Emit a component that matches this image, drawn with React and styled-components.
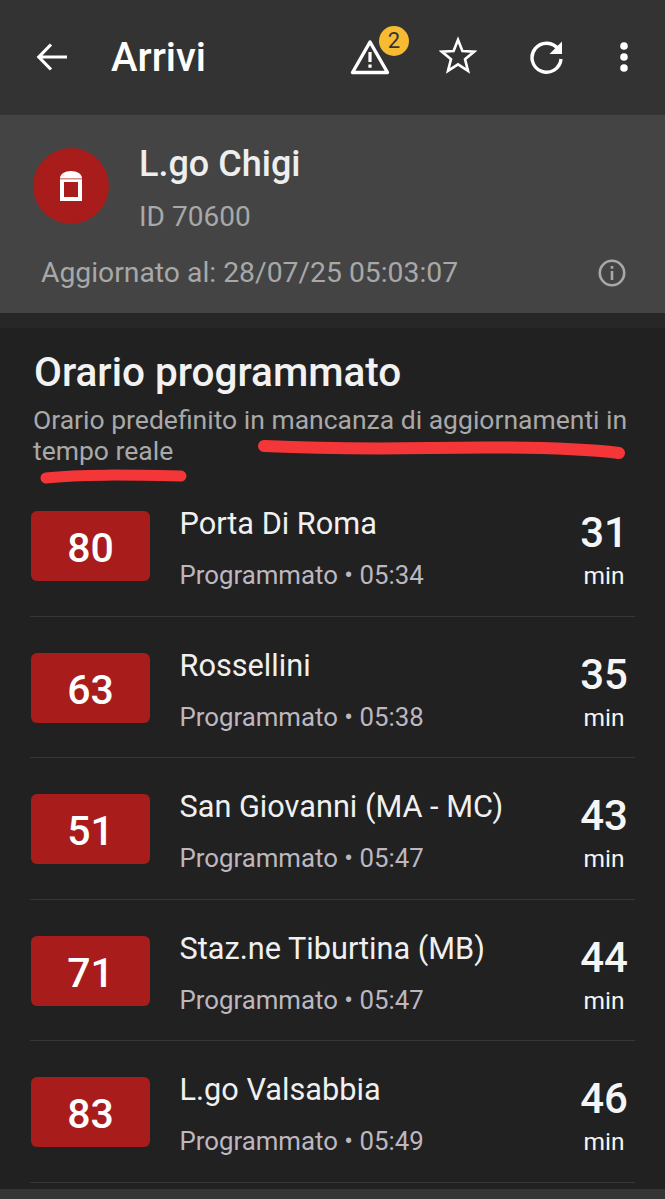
import React from "react";
import styled, { createGlobalStyle } from "styled-components";

const Global = createGlobalStyle`
  html, body { margin: 0; padding: 0; background: #212121; }
  body { font-family: Roboto, "Liberation Sans", sans-serif; }
`;
const Page = styled.div`
  position: relative; width: 665px; height: 1199px; overflow: hidden;
  background: #212121; display: flex; flex-direction: column;
`;
const Toolbar = styled.header`
  height: 115px; flex: none; box-sizing: border-box; background: #333333;
  display: flex; align-items: center; padding: 0 0 2px 36px; color: #fff;
`;
const Title = styled.h1`
  margin: 3px 0 0 43px; font-size: 40px; font-weight: 500; line-height: 42px; flex: 1;
`;
const IconSlot = styled.div`
  position: relative; width: 40px; height: 40px; display: flex; align-items: center; justify-content: center;
  margin-right: ${p => p.$gap}px;
`;
const Badge = styled.span`
  position: absolute; top: -11px; left: 29px; width: 30px; height: 30px; border-radius: 50%;
  background: #f6bb33; color: #333; font-size: 22px; line-height: 30px; text-align: center;
`;
const StopCard = styled.section`
  height: 198px; flex: none; box-sizing: border-box; background: #444444;
  padding: 31px 39px 0 33px; display: flex; flex-direction: column;
`;
const StopTop = styled.div`display: flex; gap: 30px;`;
const StopCircle = styled.div`
  width: 76px; height: 76px; margin-top: 2px; border-radius: 50%; background: #a81c1c;
  display: flex; align-items: center; justify-content: center; flex: none;
`;
const StopName = styled.div`
  font-size: 36px; font-weight: 500; line-height: 38px; color: #eeeeee; margin-top: -1px;
`;
const StopId = styled.div`
  font-size: 28px; line-height: 34px; color: #a8a8a8; margin-top: 17px;
`;
const Updated = styled.div`
  display: flex; justify-content: space-between; align-items: center; margin: 22px 0 0 8px;
  font-size: 28.3px; line-height: 34px; color: #a8a8a8;
`;
const Shade = styled.div`height: 15px; flex: none; background: #272727;`;
const Content = styled.main`padding: 22px 30px 0; flex: 1;`;
const SectionTitle = styled.h2`
  margin: 0 0 0 4px; font-size: 40.5px; font-weight: 500; line-height: 44px; color: #f2f2f2;
`;
const SectionNote = styled.p`
  margin: 10px 0 0 3px; font-size: 26.5px; line-height: 31px; color: #a9a9a9; white-space: nowrap;
`;
const List = styled.div`margin-top: 9px;`;
const Row = styled.div`
  height: 141.6px; box-sizing: border-box; border-bottom: 1px solid #363636;
  display: flex; align-items: flex-start; padding: 36px 0 0 1px;
`;
const Line = styled.div`
  width: 119px; height: 70px; flex: none; border-radius: 6px; background: #a81c1c; color: #fff;
  font-size: 41px; font-weight: 500; line-height: 74px; text-align: center;
`;
const Info = styled.div`margin-left: 29.500px; flex: 1;`;
const Dest = styled.div`font-size: 30.7px; line-height: 36px; color: #f0f0f0; margin-top: -5px;`;
const Sched = styled.div`font-size: 25.8px; line-height: 32px; color: #bdb7c0; margin-top: 17px;`;
const Eta = styled.div`
  width: 60px; margin-right: 1px; display: flex; flex-direction: column; align-items: center; color: #f5f5f5;
`;
const EtaNum = styled.div`font-size: 42px; font-weight: 500; line-height: 46px; margin-top: -1px;`;
const EtaUnit = styled.div`font-size: 24.5px; line-height: 30px; margin-top: 5px;`;
const Scribble = styled.svg`position: absolute; left: 0; top: 0; pointer-events: none;`;
const BottomBar = styled.div`position: absolute; left: 0; right: 0; bottom: 0; height: 10px; background: #353535;`;

const rows = [
  ["80", "Porta Di Roma", "05:34", "31"],
  ["63", "Rossellini", "05:38", "35"],
  ["51", "San Giovanni (MA - MC)", "05:47", "43"],
  ["71", "Staz.ne Tiburtina (MB)", "05:47", "44"],
  ["83", "L.go Valsabbia", "05:49", "46"],
];

export default function App() {
  return (
    <Page>
      <Global />
      <Toolbar>
        <svg width="32" height="32" viewBox="0 0 32 32" fill="none" stroke="#fff" strokeWidth="3.2">
          <path d="M31 16H3M15 3.5 2.8 16 15 28.5" />
        </svg>
        <Title>Arrivi</Title>
        <IconSlot $gap={48}>
          <svg width="40" height="36" viewBox="0 0 40 36" fill="none">
            <path d="M20 3 2.5 33.500h35Z" stroke="#fff" strokeWidth="3.400" strokeLinejoin="round" />
            <path d="M18.400 13h3.200v10h-3.200zM18.400 25.500h3.200v3.200h-3.200z" fill="#fff" />
          </svg>
          <Badge>2</Badge>
        </IconSlot>
        <IconSlot $gap={49}>
          <svg width="38" height="38" viewBox="0 0 38 38" fill="none" style={{ marginTop: -3 }}>
            <path d="M19 3.800 23.400 15 35.200 15.600 26 23.200 29 34.800 19 28.300 9 34.800 12 23.200 2.800 15.600 14.600 15Z" stroke="#fff" strokeWidth="2.600" strokeLinejoin="miter" />
          </svg>
        </IconSlot>
        <IconSlot $gap={52}>
          <svg width="36" height="36" viewBox="0 0 36 36" fill="none">
            <path d="M29.500 10.500A14.500 14.500 0 1 0 32 20" stroke="#fff" strokeWidth="3.400" />
            <path d="M33 2.500V15H20.500Z" fill="#fff" />
          </svg>
        </IconSlot>
        <svg width="10" height="36" viewBox="0 0 10 36" fill="#fff" style={{ marginRight: 36 }}>
          <circle cx="5" cy="7" r="3.800" /><circle cx="5" cy="18" r="3.800" /><circle cx="5" cy="29" r="3.800" />
        </svg>
      </Toolbar>
      <StopCard>
        <StopTop>
          <StopCircle>
            <svg width="22" height="30" viewBox="0 0 22 30">
              <path d="M0 7.400C0 3 5 0 11 0s11 3 11 7.400Z" fill="#fff" />
              <path fillRule="evenodd" d="M0 8.200h22V30H0ZM4 11v15h14V11Z" fill="#fff" />
            </svg>
          </StopCircle>
          <div>
            <StopName>L.go Chigi</StopName>
            <StopId>ID 70600</StopId>
          </div>
        </StopTop>
        <Updated>
          <span>Aggiornato al: 28/07/25 05:03:07</span>
          <svg width="28" height="28" viewBox="0 0 28 28" fill="none">
            <circle cx="14" cy="14" r="12.200" stroke="#a8a8a8" strokeWidth="2.600" />
            <path d="M12.700 12h2.600v9h-2.600zM12.700 7h2.600v2.800h-2.600z" fill="#a8a8a8" />
          </svg>
        </Updated>
      </StopCard>
      <Shade />
      <Content>
        <SectionTitle>Orario programmato</SectionTitle>
        <SectionNote>Orario predefinito in mancanza di aggiornamenti in<br />tempo reale</SectionNote>
        <List>
          {rows.map(([line, dest, time, eta]) => (
            <Row key={line}>
              <Line>{line}</Line>
              <Info>
                <Dest>{dest}</Dest>
                <Sched>Programmato • {time}</Sched>
              </Info>
              <Eta>
                <EtaNum>{eta}</EtaNum>
                <EtaUnit>min</EtaUnit>
              </Eta>
            </Row>
          ))}
        </List>
      </Content>
      <BottomBar />
      <Scribble width="665" height="1199" viewBox="0 0 665 1199" fill="none">
        <path d="M264 446C330 449 370 449 430 448S570 447 619 453" stroke="#f53639" strokeWidth="12" strokeLinecap="round" />
        <path d="M46 478C80 474 130 475 181 476" stroke="#f53639" strokeWidth="11" strokeLinecap="round" />
      </Scribble>
    </Page>
  );
}
